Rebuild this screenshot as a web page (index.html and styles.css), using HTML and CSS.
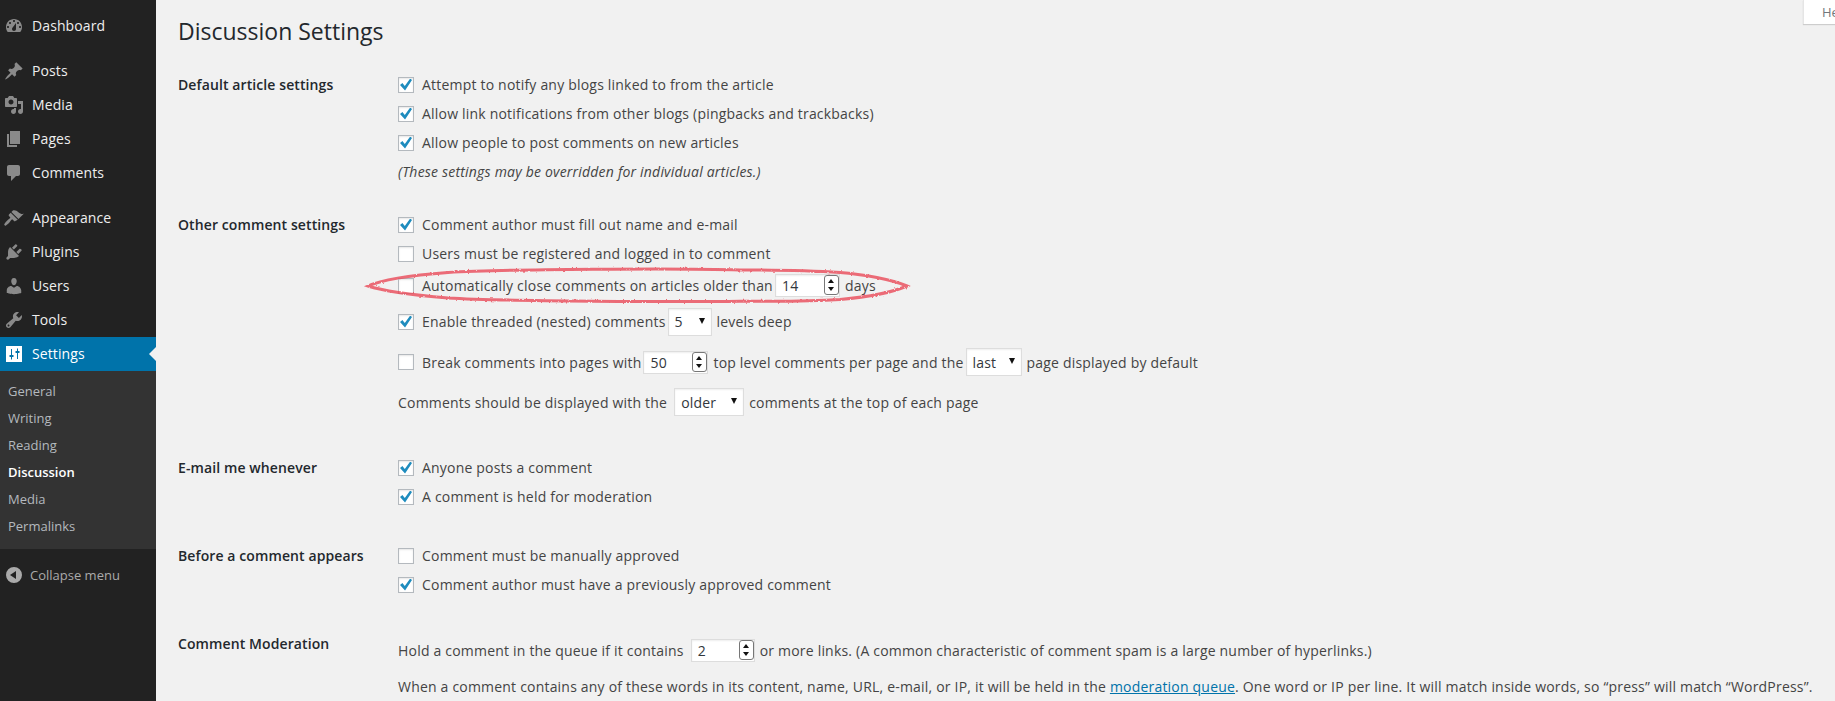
FILE: index.html
```html
<!DOCTYPE html>
<html>
<head>
    <title>Discussion Settings</title>
    <link rel="stylesheet" href="styles.css">
</head>
<body>
    <div id="page">
        <div id="sidebar">
            <div class="menu-group menu-first">
                <a class="menu-item"><svg class="icon" viewBox="0 0 20 20"><path fill-rule="evenodd" d="M3.76 16h12.48c1.1-1.37 1.76-3.11 1.76-5 0-4.42-3.58-8-8-8s-8 3.58-8 8c0 1.89.66 3.63 1.76 5zM10 4c.55 0 1 .45 1 1s-.45 1-1 1-1-.45-1-1 .45-1 1-1zM6 6c.55 0 1 .45 1 1s-.45 1-1 1-1-.45-1-1 .45-1 1-1zm8 0c.55 0 1 .45 1 1s-.45 1-1 1-1-.45-1-1 .45-1 1-1zm-5.37 5.55L12 7v6c0 1.1-.9 2-2 2s-2-.9-2-2c0-.57.24-1.08.63-1.45zM4 10c.55 0 1 .45 1 1s-.45 1-1 1-1-.45-1-1 .45-1 1-1zm12 0c.55 0 1 .45 1 1s-.45 1-1 1-1-.45-1-1 .45-1 1-1z"/></svg>Dashboard</a>
            </div>
            <div class="menu-group">
                <a class="menu-item"><svg class="icon" viewBox="0 0 20 20"><path d="M10.44 3.02l1.82-1.82 6.36 6.35-1.83 1.82c-1.05-.68-2.48-.57-3.41.36l-.75.75c-.92.93-1.04 2.35-.35 3.41l-1.83 1.82-2.41-2.41-2.8 2.79c-.42.42-3.38 2.71-3.8 2.29s1.86-3.39 2.28-3.81l2.79-2.79L4.1 9.36l1.83-1.82c1.05.69 2.48.57 3.4-.36l.75-.75c.93-.92 1.05-2.35.36-3.41z"/></svg>Posts</a>
                <a class="menu-item"><svg class="icon" viewBox="0 0 20 20"><path fill-rule="evenodd" d="M13 11V4c0-.55-.45-1-1-1h-1.67L9 1H5L3.67 3H2c-.55 0-1 .45-1 1v7c0 .55.45 1 1 1h10c.55 0 1-.45 1-1zM7 4.5c1.38 0 2.5 1.12 2.5 2.5S8.38 9.5 7 9.5 4.5 8.38 4.5 7 5.62 4.5 7 4.5zM14 6h5v10.5c0 1.38-1.12 2.5-2.5 2.5S14 17.88 14 16.5s1.12-2.5 2.5-2.5c.17 0 .34.02.5.05V9h-3V6zm-4 8.05V13h2v3.5c0 1.38-1.12 2.5-2.5 2.5S7 17.88 7 16.5 8.12 14 9.5 14c.17 0 .34.02.5.05z"/></svg>Media</a>
                <a class="menu-item"><svg class="icon" viewBox="0 0 20 20"><path d="M6 15V2h10v13H6zm-1 1h8v2H3V5h2v11z"/></svg>Pages</a>
                <a class="menu-item"><svg class="icon" viewBox="0 0 20 20"><path d="M5 2h9c1.1 0 2 .9 2 2v7c0 1.1-.9 2-2 2h-2l-5 5v-5H5c-1.1 0-2-.9-2-2V4c0-1.1.9-2 2-2z"/></svg>Comments</a>
            </div>
            <div class="menu-group">
                <a class="menu-item"><svg class="icon" viewBox="0 0 20 20"><path d="M14.48 11.06L7.41 3.99l1.5-1.5c.5-.56 2.3-.47 3.51.32 1.21.8 1.43 1.28 2.91 2.1 1.18.64 2.45 1.26 4.45.85zm-.71.71L6.7 4.7 4.93 6.47c-.39.39-.39 1.02 0 1.41l1.06 1.06c.39.39.39 1.03 0 1.42-.6.6-1.43 1.11-2.21 1.69-.35.26-.7.53-1.01.84-1.43 1.43-2.6 3.1-2.6 3.5 0 .4.9 1.3 1.3 1.3.4 0 2.1-1.2 3.5-2.6.31-.31.58-.66.84-1.01.58-.78 1.09-1.61 1.69-2.21.39-.39 1.03-.39 1.42 0l1.06 1.06c.39.39 1.02.39 1.41 0z"/></svg>Appearance</a>
                <a class="menu-item"><svg class="icon" viewBox="0 0 20 20"><path d="M13.11 4.36L9.87 7.6 8 5.73l3.24-3.24c.35-.34 1.05-.2 1.56.32.52.51.66 1.21.31 1.55zm-8 1.77l.91-1.12 9.01 9.01-1.19.84c-.71.71-2.63 1.16-3.82 1.16H6.14L4.9 17.26c-.59.59-1.54.59-2.12 0-.59-.58-.59-1.53 0-2.12l1.24-1.24v-3.88c0-1.13.4-3.19 1.09-3.89zm7.26 3.97l3.24-3.24c.34-.35 1.04-.21 1.55.31.52.51.66 1.21.31 1.55l-3.24 3.25z"/></svg>Plugins</a>
                <a class="menu-item"><svg class="icon" viewBox="0 0 20 20"><path d="M10 9.25c-2.27 0-2.73-3.44-2.73-3.44C7 4.02 7.82 2 9.97 2c2.16 0 2.98 2.02 2.71 3.81 0 0-.41 3.44-2.68 3.44zm0 2.57L12.72 10c2.39 0 4.52 2.33 4.52 4.53v2.49s-3.65 1.13-7.24 1.13c-3.65 0-7.24-1.13-7.24-1.13v-2.49c0-2.25 1.94-4.48 4.47-4.48z"/></svg>Users</a>
                <a class="menu-item"><svg class="icon" viewBox="0 0 20 20"><path fill-rule="evenodd" d="M16.68 9.77c-1.34 1.34-3.3 1.67-4.95.99l-5.41 6.52c-.99.99-2.59.99-3.58 0s-.99-2.59 0-3.57l6.52-5.42c-.68-1.65-.35-3.61.99-4.95 1.28-1.28 3.12-1.62 4.72-1.06l-2.89 2.89 2.82 2.82 2.86-2.87c.53 1.58.18 3.39-1.08 4.65zM3.81 16.21c.4.39 1.04.39 1.43 0 .4-.4.4-1.04 0-1.43-.39-.4-1.03-.4-1.43 0-.39.39-.39 1.03 0 1.43z"/></svg>Tools</a>
                <a class="menu-item current"><svg class="icon" viewBox="0 0 20 20"><path fill="#fff" d="M2 2h16v16H2z"/><path fill="#0073aa" d="M7 5h1v6h1.5v2H8v2.5H7V13H5.5v-2H7zM13 4.5h1V7h1.500v2H14v6h-1V9h-1.500V7H13z"/></svg>Settings</a>
            </div>
            <div class="submenu">
                <a>General</a>
                <a>Writing</a>
                <a>Reading</a>
                <a class="active">Discussion</a>
                <a>Media</a>
                <a>Permalinks</a>
            </div>
            <a class="collapse"><svg class="icon" viewBox="0 0 20 20"><path fill-rule="evenodd" d="M10 2a8 8 0 1 0 0 16 8 8 0 0 0 0-16zm2 4v8l-6-4z"/></svg>Collapse menu</a>
        </div>

        <div id="content">
            <div class="help-tab">Help</div>
            <h1>Discussion Settings</h1>

            <div class="section section-default">
                <div class="section-label">Default article settings</div>
                <div class="section-body">
                    <label class="row"><input type="checkbox" checked>Attempt to notify any blogs linked to from the article</label>
                    <label class="row"><input type="checkbox" checked>Allow link notifications from other blogs (pingbacks and trackbacks)</label>
                    <label class="row"><input type="checkbox" checked>Allow people to post comments on new articles</label>
                    <div class="row note">(These settings may be overridden for individual articles.)</div>
                </div>
            </div>

            <div class="section section-other">
                <div class="section-label">Other comment settings</div>
                <div class="section-body">
                    <label class="row"><input type="checkbox" checked>Comment author must fill out name and e-mail</label>
                    <label class="row"><input type="checkbox">Users must be registered and logged in to comment</label>
                    <label class="row row-close"><input type="checkbox">Automatically close comments on articles older than<span class="number w65"><input type="text" value="14"><span class="spin"><i class="up"></i><i class="down"></i></span></span>days</label>
                    <label class="row row-thread"><input type="checkbox" checked>Enable threaded (nested) comments<span class="select w44"><select><option>5</option></select></span>levels deep</label>
                    <label class="row row-pages"><input type="checkbox">Break comments into pages with<span class="number w65"><input type="text" value="50"><span class="spin"><i class="up"></i><i class="down"></i></span></span>top level comments per page and the<span class="select w56"><select><option>last</option></select></span>page displayed by default</label>
                    <div class="row row-order">Comments should be displayed with the<span class="select w70 gap-left"><select><option>older</option></select></span>comments at the top of each page</div>
                </div>
            </div>

            <div class="section section-email">
                <div class="section-label">E-mail me whenever</div>
                <div class="section-body">
                    <label class="row"><input type="checkbox" checked>Anyone posts a comment</label>
                    <label class="row"><input type="checkbox" checked>A comment is held for moderation</label>
                </div>
            </div>

            <div class="section section-before">
                <div class="section-label">Before a comment appears</div>
                <div class="section-body">
                    <label class="row"><input type="checkbox">Comment must be manually approved</label>
                    <label class="row"><input type="checkbox" checked>Comment author must have a previously approved comment</label>
                </div>
            </div>

            <div class="section section-moderation">
                <div class="section-label">Comment Moderation</div>
                <div class="section-body">
                    <div class="row row-hold">Hold a comment in the queue if it contains<span class="number w64 gap-left"><input type="text" value="2"><span class="spin"><i class="up"></i><i class="down"></i></span></span>or more links. (A common characteristic of comment spam is a large number of hyperlinks.)</div>
                    <div class="row row-words">When a comment contains any of these words in its content, name, URL, e-mail, or IP, it will be held in the&nbsp;<a href="#">moderation queue</a>. One word or IP per line. It will match inside words, so “press” will match “WordPress”.</div>
                </div>
            </div>

            <!-- hand drawn red circle from the screenshot -->
            <svg class="scribble" viewBox="0 0 550 44">
                <filter id="rough" x="-5%" y="-30%" width="110%" height="160%">
                    <feTurbulence type="fractalNoise" baseFrequency="0.4" numOctaves="2" seed="4"/>
                    <feDisplacementMap in="SourceGraphic" scale="2.5"/>
                </filter>
                <path filter="url(#rough)" d="M5 22C20 15 50 11 85 8.400C140 5 320 4 377 5.900C420 6 450 6.700 477 8.400C500 10 530 16 544 22C530 28 505 33 477 35.600C440 38 420 37.300 377 37.300C320 38 140 37.300 85 34C50 31 20 27 5 22Z"/>
            </svg>
        </div>
    </div>
</body>
</html>
```

FILE: styles.css
```css
html, body {
    margin: 0;
    height: 100%;
    overflow: hidden;
}

body {
    font-family: "Open Sans", sans-serif;
    font-size: 14px;
    color: #444;
    background-color: #f1f1f1;
}

#page {
    display: flex;
    height: 701px;
    overflow: hidden;
}

/* sidebar */
#sidebar {
    width: 156px;
    flex-shrink: 0;
    background-color: #222;
    display: flex;
    flex-direction: column;
}

.menu-group {
    margin-bottom: 11px;
}

.menu-first {
    padding-top: 9px;
    margin-bottom: 11px;
}

.menu-group:nth-child(3) {
    margin-bottom: 0;
}

.menu-item {
    display: flex;
    align-items: center;
    height: 34px;
    color: #eee;
    position: relative;
    letter-spacing: 0.1px;
    padding-bottom: 2px;
    box-sizing: border-box;
}

.icon {
    width: 20px;
    height: 20px;
    margin-left: 4px;
    margin-right: 8px;
    fill: #8a8a8a;
    flex-shrink: 0;
}

.menu-item .icon {
    margin-bottom: -2px;
}

.menu-item.current {
    background-color: #0073aa;
    color: #fff;
}

.menu-item.current::after {
    content: "";
    position: absolute;
    right: 0;
    top: 10px;
    border: 7px solid transparent;
    border-left-width: 0;
    border-right-color: #f1f1f1;
}

.submenu {
    background-color: #333;
    padding: 7px 0 9px;
}

.submenu a {
    display: block;
    height: 27px;
    line-height: 27px;
    padding-left: 8px;
    font-size: 13px;
    color: #b4b9be;
}

.submenu a.active {
    color: #fff;
    font-weight: 600;
}

.collapse {
    display: flex;
    align-items: center;
    height: 34px;
    margin-top: 9px;
    font-size: 13px;
    color: #aaa;
}

.collapse .icon {
    margin-right: 6px;
    fill: #aaa;
}

/* content */
#content {
    flex: 1;
    position: relative;
    padding-left: 22px;
    min-width: 0;
}

h1 {
    margin: 0;
    padding-top: 14px;
    height: 43px;
    font-size: 23px;
    line-height: 34px;
    font-weight: 400;
    color: #23282d;
}

.help-tab {
    position: absolute;
    top: 0;
    right: 0;
    width: 13px;
    height: 24px;
    padding-left: 18px;
    background-color: #fff;
    box-shadow: 0 1px 1px rgba(0, 0, 0, 0.15);
    border-left: 1px solid #e5e5e5;
    font-size: 13px;
    line-height: 24px;
    color: #72777c;
    overflow: hidden;
    white-space: nowrap;
}

.section {
    display: flex;
}

.section-label {
    width: 220px;
    flex-shrink: 0;
    height: 29px;
    line-height: 29px;
    font-weight: 600;
    color: #23282d;
    letter-spacing: 0.1px;
}

.section-body {
    flex: 1;
    min-width: 0;
    letter-spacing: 0.2px;
}

.section-default { margin-top: 13px; }
.section-other { margin-top: 24px; }
.section-email { margin-top: 33px; }
.section-before { margin-top: 30px; }
.section-moderation { margin-top: 30px; }

.row {
    display: flex;
    align-items: center;
    height: 29px;
    white-space: nowrap;
}

.row-close { height: 35px; }
.row-thread { height: 37px; }
.row-pages { height: 44px; }
.row-order { height: 36px; }
.row-hold { height: 43px; }
.row-words { height: 29px; }

.note {
    font-style: italic;
}

a {
    text-decoration: none;
}

.row a {
    color: #0073aa;
    text-decoration: underline;
}

/* checkbox */
.row input[type="checkbox"] {
    appearance: none;
    -webkit-appearance: none;
    width: 16px;
    height: 16px;
    margin: 0 8px 0 0;
    flex-shrink: 0;
    background-color: #fff;
    border: 1px solid #b4b9be;
    box-shadow: inset 0 1px 2px rgba(0, 0, 0, 0.1);
    position: relative;
}

.row input[type="checkbox"]:checked::before {
    content: "";
    position: absolute;
    left: 1px;
    top: 1px;
    width: 12px;
    height: 12px;
    background-color: #1e8cbe;
    clip-path: polygon(0 55%, 20% 38%, 40% 62%, 85% 0, 100% 12%, 42% 100%);
}

/* number and select boxes */
.number, .select {
    display: block;
    position: relative;
    margin: 0 5px 0 2px;
    flex-shrink: 0;
}

.number input, .select select {
    display: block;
    box-sizing: border-box;
    width: 100%;
    margin: 0;
    padding: 0 0 0 6px;
    border: 1px solid #ddd;
    border-radius: 0;
    background-color: #fff;
    box-shadow: inset 0 1px 2px rgba(0, 0, 0, 0.07);
    font-family: inherit;
    font-size: 14px;
    letter-spacing: 0.2px;
    color: #32373c;
    outline: none;
}

.number input {
    height: 23px;
}

.select select {
    height: 28px;
    appearance: none;
    -webkit-appearance: none;
}

.select::after {
    content: "";
    position: absolute;
    right: 7px;
    top: 10px;
    border-style: solid;
    border-width: 6px 3.5px 0;
    border-color: #111 transparent transparent;
}

.gap-left {
    margin-left: 7px;
}

.w44 { width: 44px; }
.w56 { width: 56px; }
.w64 { width: 64px; }
.w65 { width: 65px; }
.w70 { width: 70px; }

.spin {
    position: absolute;
    right: 1px;
    top: 1px;
    width: 15px;
    height: 20px;
    box-sizing: border-box;
    border: 1px solid #777;
    border-radius: 3px;
    background-color: #fff;
}

.spin i {
    position: absolute;
    left: 3px;
    border-style: solid;
    border-color: transparent;
    border-width: 0 3.5px;
}

.spin .up {
    top: 3px;
    border-bottom: 4px solid #111;
}

.spin .down {
    bottom: 3px;
    border-top: 4px solid #111;
}

/* the red ring, sits over the "close comments" row */
.scribble {
    position: absolute;
    left: 207px;
    top: 264px;
    width: 550px;
    height: 44px;
    overflow: visible;
    pointer-events: none;
}

.scribble path {
    fill: none;
    stroke: #ea4a58;
    stroke-width: 3;
    stroke-opacity: 0.8;
}
```
